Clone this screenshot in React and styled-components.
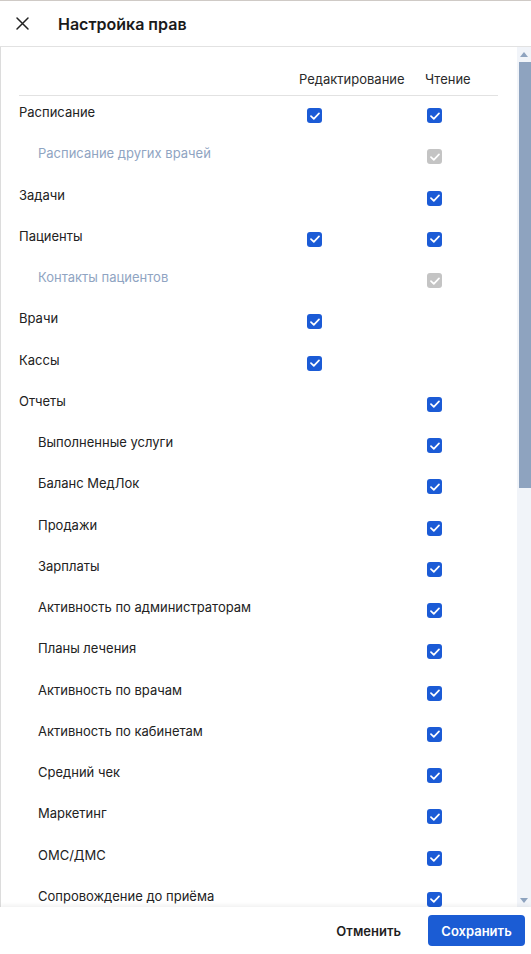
import React from "react";
import styled, { createGlobalStyle } from "styled-components";

const GlobalStyle = createGlobalStyle`
  html, body { margin: 0; padding: 0; background: #fff; }
  body { font-family: Inter, "Noto Sans", Roboto, sans-serif; color: #222; }
  * { box-sizing: border-box; }
`;

const Page = styled.div`
  height: 954px;
  display: flex;
  flex-direction: column;
  border-top: 1px solid #cfcac6;
  background: #fff;
  overflow: hidden;
`;

const Header = styled.div`
  height: 46px;
  flex: none;
  display: flex;
  align-items: center;
  padding-left: 15px;
  gap: 28px;
  border-bottom: 1px solid #e2e2e2;
`;

const CloseBtn = styled.button`
  width: 15px;
  height: 15px;
  padding: 0;
  border: 0;
  background: none;
  display: flex;
  cursor: pointer;
`;

const Title = styled.h1`
  margin: 0;
  font-size: 16px;
  font-weight: 600;
  color: #1a1a1a;
`;

const Body = styled.div`
  flex: 1;
  min-height: 0;
  display: flex;
  border-left: 1px solid #dcdcdc;
`;

const Content = styled.div`
  flex: 1;
  min-width: 0;
  overflow: hidden;
`;

const ScrollBar = styled.div`
  width: 14px;
  flex: none;
  display: flex;
  flex-direction: column;
  background: #f1f4f9;
`;

const ArrowBtn = styled.div`
  height: 14px;
  flex: none;
  display: flex;
  align-items: center;
  justify-content: center;
`;

const Track = styled.div`
  flex: 1;
  padding: 1px 0 0 2px;
`;

const Thumb = styled.div`
  height: 426px;
  background: #8ea3bf;
`;

const Table = styled.div`
  padding: 0 19px 0 18px;
`;

const Grid = styled.div`
  display: grid;
  grid-template-columns: 1fr 126px 73px;
  align-items: start;
`;

const HeadRow = styled(Grid)`
  padding: 24px 0 8px;
  border-bottom: 1px solid #e2e2e2;
  font-size: 13px;
  line-height: 16px;
  color: #2a2a2a;
`;

const Row = styled(Grid)`
  height: 41.25px;
  padding-top: 8px;
`;

const Label = styled.div`
  font-size: 13px;
  line-height: 16px;
  padding-left: ${(p) => (p.$sub ? "19px" : "0")};
  color: ${(p) => (p.$muted ? "#8fa4c2" : "#222")};
  white-space: nowrap;
`;

const Cell = styled.div`
  display: flex;
  padding-left: ${(p) => p.$pad}px;
  padding-top: 4px;
`;

const Box = styled.span`
  display: flex;
  width: 15px;
  height: 15px;
  border-radius: 3px;
  align-items: center;
  justify-content: center;
  background: ${(p) => (p.$disabled ? "#c4c4c4" : "#1b5bd6")};
`;

const Footer = styled.div`
  height: 47px;
  flex: none;
  display: flex;
  align-items: center;
  justify-content: flex-end;
  gap: 27px;
  padding-right: 6px;
  box-shadow: 0 -2px 4px rgba(0, 0, 0, 0.06);
  position: relative;
  background: #fff;
`;

const TextButton = styled.button`
  border: 0;
  background: none;
  font-family: inherit;
  font-size: 13px;
  font-weight: 600;
  color: #1f1f1f;
  padding: 0;
  cursor: pointer;
`;

const PrimaryButton = styled.button`
  width: 97px;
  height: 31px;
  border: 0;
  border-radius: 4px;
  background: #1b5cd4;
  color: #fff;
  font-family: inherit;
  font-size: 13px;
  font-weight: 600;
  cursor: pointer;
`;

function Check({ disabled }) {
  return (
    <Box $disabled={disabled}>
      <svg width="10" height="8" viewBox="0 0 10 8">
        <path d="M1 4.2 L3.8 6.8 L9 1.3" fill="none" stroke="#fff" strokeWidth="1.7" strokeLinecap="round" strokeLinejoin="round" />
      </svg>
    </Box>
  );
}

const rows = [
  { label: "Расписание", edit: true, read: true },
  { label: "Расписание других врачей", sub: true, muted: true, read: "disabled" },
  { label: "Задачи", read: true },
  { label: "Пациенты", edit: true, read: true },
  { label: "Контакты пациентов", sub: true, muted: true, read: "disabled" },
  { label: "Врачи", edit: true },
  { label: "Кассы", edit: true },
  { label: "Отчеты", read: true },
  { label: "Выполненные услуги", sub: true, read: true },
  { label: "Баланс МедЛок", sub: true, read: true },
  { label: "Продажи", sub: true, read: true },
  { label: "Зарплаты", sub: true, read: true },
  { label: "Активность по администраторам", sub: true, read: true },
  { label: "Планы лечения", sub: true, read: true },
  { label: "Активность по врачам", sub: true, read: true },
  { label: "Активность по кабинетам", sub: true, read: true },
  { label: "Средний чек", sub: true, read: true },
  { label: "Маркетинг", sub: true, read: true },
  { label: "ОМС/ДМС", sub: true, read: true },
  { label: "Сопровождение до приёма", sub: true, read: true },
];

export default function App() {
  return (
    <>
      <GlobalStyle />
      <Page>
        <Header>
          <CloseBtn aria-label="Закрыть">
            <svg width="15" height="15" viewBox="0 0 15 15">
              <path d="M2 2 L13 13 M13 2 L2 13" stroke="#222" strokeWidth="1.5" strokeLinecap="round" />
            </svg>
          </CloseBtn>
          <Title>Настройка прав</Title>
        </Header>
        <Body>
          <Content>
            <Table>
              <HeadRow>
                <div />
                <div>Редактирование</div>
                <div>Чтение</div>
              </HeadRow>
              {rows.map((r) => (
                <Row key={r.label}>
                  <Label $sub={r.sub} $muted={r.muted}>{r.label}</Label>
                  <Cell $pad={8}>{r.edit && <Check disabled={r.edit === "disabled"} />}</Cell>
                  <Cell $pad={2}>{r.read && <Check disabled={r.read === "disabled"} />}</Cell>
                </Row>
              ))}
            </Table>
          </Content>
          <ScrollBar>
            <ArrowBtn>
              <svg width="8" height="5" viewBox="0 0 8 5"><path d="M4 0 L8 5 L0 5 Z" fill="#8ea3bf" /></svg>
            </ArrowBtn>
            <Track>
              <Thumb />
            </Track>
            <ArrowBtn>
              <svg width="8" height="5" viewBox="0 0 8 5"><path d="M0 0 L8 0 L4 5 Z" fill="#8ea3bf" /></svg>
            </ArrowBtn>
          </ScrollBar>
        </Body>
        <Footer>
          <TextButton>Отменить</TextButton>
          <PrimaryButton>Сохранить</PrimaryButton>
        </Footer>
      </Page>
    </>
  );
}
